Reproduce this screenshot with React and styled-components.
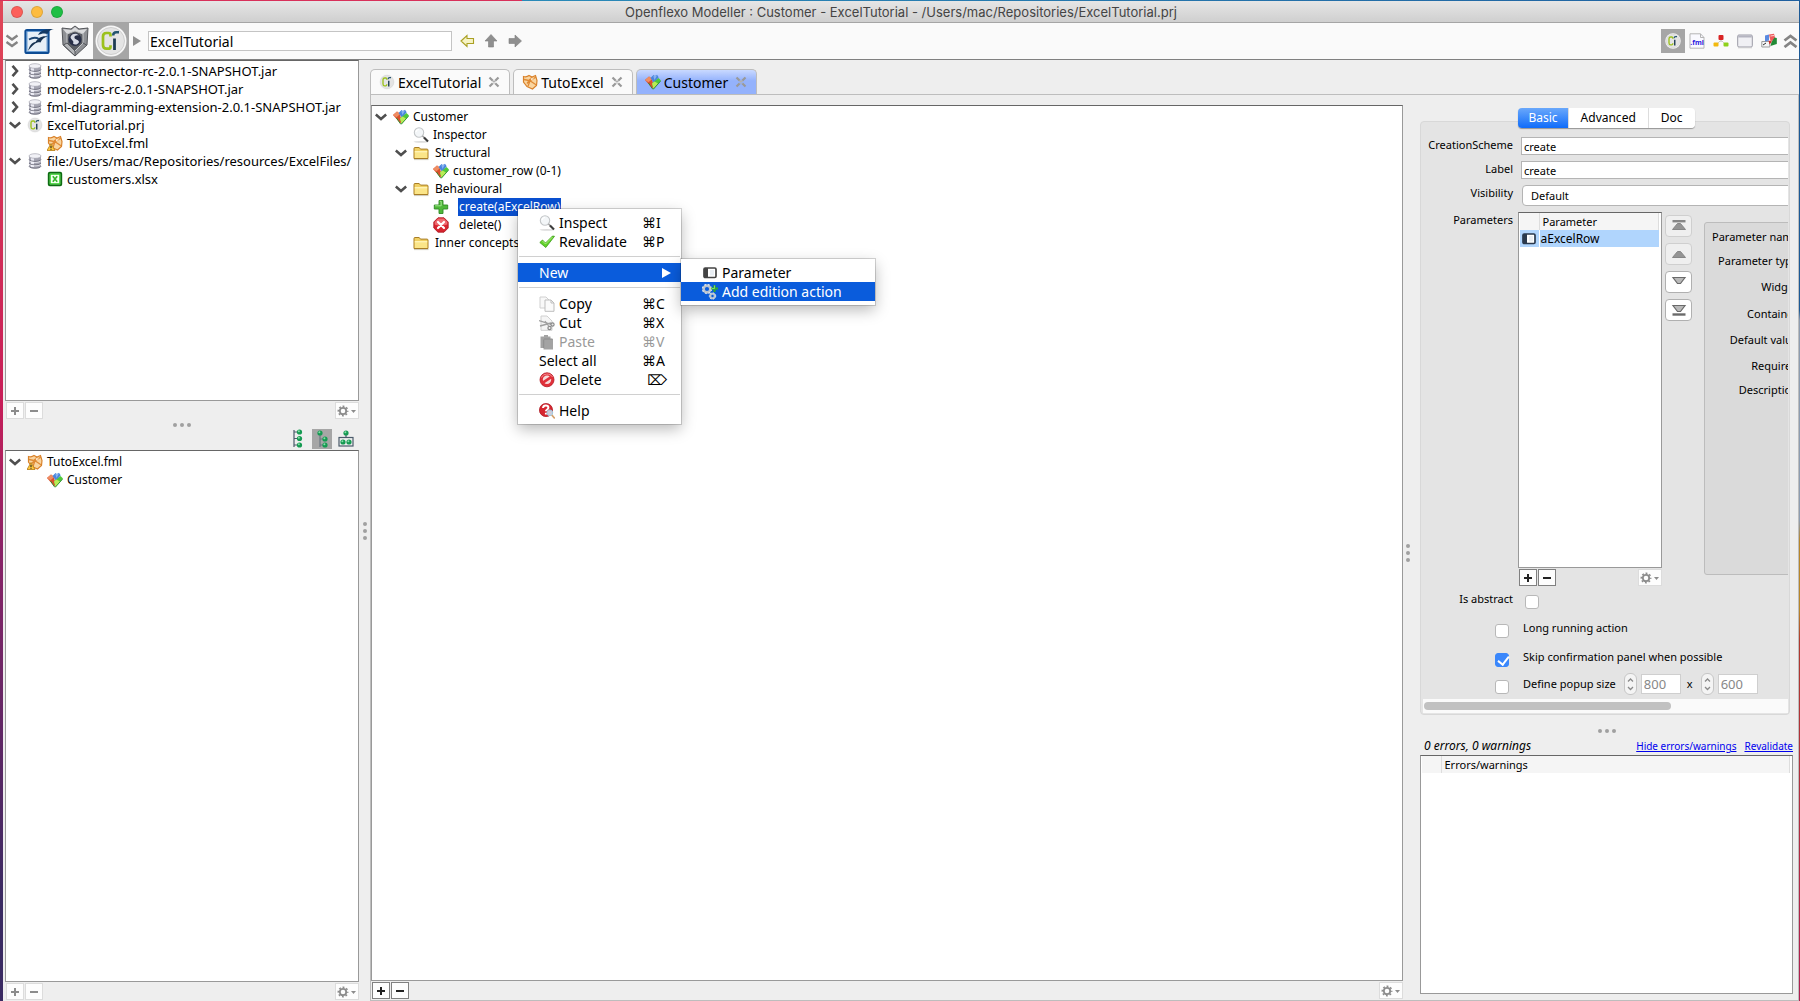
import React from 'react';
import styled, { createGlobalStyle } from 'styled-components';

const GlobalStyle = createGlobalStyle`
  * {
    box-sizing: border-box;
  }
  body {
    margin: 0;
    font-family: 'Noto Sans', 'DejaVu Sans', sans-serif;
    font-size: 12px;
    color: #000;
    background:
      linear-gradient(90deg, #d8305a 0 29%, #2a8ab8 29%, #1f5f9f) top / 100% 1px no-repeat,
      linear-gradient(#e04858, #c81e58 40%, #8a2468 55%, #3a2a62 90%) left / 4px 100% no-repeat,
      linear-gradient(#1d5a96 0 31%, #8d9cb0 32% 52%, #b8862a 54% 61%, #b03a30 64%, #b01e50) right / 2px 100% no-repeat;
  }
  button, input, select {
    font: inherit;
    color: inherit;
    margin: 0;
  }
`;

/* ---------- icons ---------- */

const Svg = styled.svg`
  display: block;
  flex: none;
`;

const Icon = ({ size = 16, w, h, box, children }) => (
  <Svg width={w || size} height={h || size} viewBox={box || '0 0 16 16'} fill="none" aria-hidden="true">
    {children}
  </Svg>
);

const DatabaseIcon = () => (
  <Icon>
    <path d="M2 3v10c0 1.600 2.700 2.500 6 2.500s6-.9 6-2.500V3z" fill="#a5a5b2" />
    <path d="M4 3v11h3V3z" fill="#e9e9f2" />
    <ellipse cx="8" cy="3" rx="6" ry="2.300" fill="#f1f1f6" stroke="#9a9aa6" strokeWidth=".6" />
    <path d="M2 6.500c1 2.500 11 2.500 12 0M2 10c1 2.500 11 2.500 12 0M2 13.300c1 2.500 11 2.500 12 0" stroke="#6f6f7d" strokeWidth=".9" />
    <path d="M2 7.600c1 2.500 11 2.500 12 0M2 11c1 2.500 11 2.500 12 0" stroke="#fafaff" strokeWidth=".7" />
  </Icon>
);

const CiIcon = ({ size = 16 }) => (
  <Icon size={size} box="0 0 32 32">
    <circle cx="16" cy="16" r="15.500" fill="#f6f6f6" />
    <circle cx="16" cy="16" r="13.500" fill="#e4e4e4" stroke="#cfcfcf" />
    <path d="M15.500 11.500V10c0-1.400-.6-2-2-2h-2C9 8 8 9.200 8 11.500v8.500c0 2.500 1 3.700 3.500 3.700h2c1.400 0 2-.6 2-2v-1.400" stroke="#9bc11c" strokeWidth="2.700" />
    <path d="M19.500 13.500V25" stroke="#1d3b52" strokeWidth="2.800" />
    <path d="M18.200 10.500c0-2.300 1-3.300 3-3.300H24" stroke="#24556e" strokeWidth="2.500" />
  </Icon>
);

const FmlIcon = ({ warn }) => (
  <Icon>
    <path d="M1.500 2.500c2 .6 4 .2 5.500-1L10 3l3.500-1.500L15 6.500l-.5 5L10.500 15 5 12.500 1.500 8z" fill="#f9d5a0" stroke="#d9822b" strokeWidth="1.200" />
    <path d="M2 5.500l6 1.200L14 3M8 6.700l-2 5.500M8 6.700l6 4M10 3L5 9.500" stroke="#e08a34" strokeWidth="1.300" />
    <path d="M8.500 4.200l3.500.3-2.500 1.800z" fill="#fff4e0" />
    {warn && (
      <>
        <path d="M4 8.500L8 15.500H0z" fill="#ffc93c" stroke="#b47a12" strokeWidth=".8" />
        <path d="M4 10.800v2.200M4 13.800v1" stroke="#222" strokeWidth="1.100" />
      </>
    )}
  </Icon>
);

const XlsxIcon = () => (
  <Icon>
    <rect x="1.800" y="1.800" width="12.400" height="12.400" rx="1" fill="#fff" stroke="#0d6b12" strokeWidth="2" />
    <rect x="3.200" y="3.200" width="9.600" height="9.600" fill="#f3fff0" stroke="#36d02c" strokeWidth="1.200" />
    <path d="M5.800 5.200l4.400 5.600M10.200 5.200l-4.400 5.600" stroke="#35b52a" strokeWidth="1.600" />
  </Icon>
);

const ConceptIcon = () => (
  <Icon>
    <path d="M0 6l4-3.500 3 2.300L8.500 12 7.500 14.500z" fill="#d9512c" />
    <path d="M0 6l4-3.500 3.300 2.600L3.500 8.200z" fill="#ef8d63" />
    <path d="M5.500 4L8.500 1l1.400 1L12 .8l1.700 2.400L9.200 9z" fill="#4a86dc" />
    <path d="M8.300 2.300L12 1.600 9.500 6z" fill="#86b2f0" />
    <path d="M7 9.500L13.500 4l2.500 2.600L8.500 15z" fill="#4fc93a" />
    <path d="M7 9.500l2.500-2 3.500 2-4.500 5.300z" fill="#b9ec55" />
    <path d="M3.500 9l3.800 5.700L8.500 15l7-7.800" stroke="#2c8a2c" strokeWidth=".9" />
  </Icon>
);

const InspectIcon = () => (
  <Icon>
    <ellipse cx="8" cy="14.800" rx="7.500" ry=".9" fill="#dcdcdc" />
    <circle cx="6" cy="5.500" r="4.700" fill="#f3f6f8" stroke="#c3c6c8" strokeWidth="1.100" />
    <path d="M3 5c.3-1.800 1.500-2.500 3-2.500" stroke="#fff" strokeWidth="1.200" />
    <path d="M9.500 9l1.800 1.700" stroke="#999" strokeWidth="1.500" />
    <path d="M11 10.500l4 4" stroke="#3b3b3b" strokeWidth="2.200" />
  </Icon>
);

const FolderIcon = () => (
  <Icon>
    <path d="M1 13.500V3.500c0-.6.300-1 1-1h4.200l1.300 1.600H14c.6 0 1 .3 1 .9v8.500z" fill="#f0cf62" stroke="#a87d25" />
    <path d="M1.800 6h12.400v7H1.800z" fill="#fbe588" />
    <path d="M1.800 6h12.400v1.400H1.800z" fill="#fff3b4" />
    <path d="M1 14.600h14.500" stroke="#bfb9a6" strokeWidth=".8" />
  </Icon>
);

const PlusIcon = () => (
  <Icon>
    <path d="M6 1.500h4V6h4.700v4H10v4.500H6V10H1.300V6H6z" fill="#4fb83a" stroke="#2f8a24" strokeWidth=".9" />
    <path d="M6.800 2.300h1.400v4.500H2.100" stroke="#a2e58d" />
  </Icon>
);

const StopXIcon = () => (
  <Icon>
    <path d="M5 .8h6L15.200 5v6L11 15.200H5L.8 11V5z" fill="#d8242f" stroke="#a8131d" strokeWidth=".8" />
    <path d="M5.200 1.600h5.600L14.300 5v2.500C10 9 5 9 1.700 7.500V5z" fill="#ee6a70" />
    <path d="M5 5l6 6M11 5l-6 6" stroke="#fff" strokeWidth="2.200" strokeLinecap="round" />
  </Icon>
);

const CheckIcon = () => (
  <Icon>
    <path d="M.8 8.500L3.500 6l3 3L13.500 2l2 .3-8.700 11.200z" fill="#62d22b" stroke="#3d9c1a" strokeWidth=".8" />
    <path d="M3.500 7l3 3L13.500 3" stroke="#b8f28c" strokeWidth=".8" />
  </Icon>
);

const CopyIcon = () => (
  <Icon>
    <path d="M1 1h6l3 3v8H1z" fill="#f8f8f8" stroke="#d0d0d0" />
    <path d="M6 4h6l3 3v8.300H6z" fill="#fafafa" stroke="#bdbdbd" />
    <path d="M12 4v3h3" stroke="#bdbdbd" />
  </Icon>
);

const CutIcon = () => (
  <Icon>
    <path d="M2 1h6l5 5v9.300H2z" fill="#f5f5f5" stroke="#d0d0d0" />
    <path d="M0 5.500l12 3.800M1 11l11-3" stroke="#a0a0a0" strokeWidth="1.300" />
    <circle cx="13.500" cy="9.500" r="1.600" stroke="#888" strokeWidth="1.200" />
    <circle cx="10.500" cy="13" r="1.600" stroke="#888" strokeWidth="1.200" />
    <path d="M6 6l4 5.500" stroke="#a0a0a0" strokeWidth="1.200" />
  </Icon>
);

const PasteIcon = () => (
  <Icon>
    <path d="M1.500 2.500H5V1h4v1.500h2.500V5H14v10.500H4.500V14h-3z" fill="#a3a3a3" />
    <path d="M5 5h8.500M4.700 5.500V14" stroke="#8d8d8d" />
  </Icon>
);

const ForbidIcon = () => (
  <Icon>
    <circle cx="8" cy="7.800" r="7" fill="#e0303a" stroke="#b5151f" strokeWidth=".8" />
    <circle cx="8" cy="7.800" r="4.200" fill="#f6dada" />
    <path d="M3.500 10.800l9-6" stroke="#e0303a" strokeWidth="2.800" />
    <path d="M2.500 5.500c1.500-4 8.500-5 11-.5" stroke="#f58f93" />
  </Icon>
);

const HelpIcon = () => (
  <Icon>
    <circle cx="7" cy="7" r="6.600" fill="#d62630" stroke="#a9121c" strokeWidth=".7" />
    <path d="M4 5c.2-1.900 1.300-2.500 2.700-2.500 1.600 0 2.700.9 2.700 2.200 0 1.800-2.500 1.800-2.500 3.600M6.900 9.800v1.700" stroke="#fff" strokeWidth="2" />
    <circle cx="10.800" cy="9.800" r="2.900" fill="#cfeaf8" fillOpacity=".85" stroke="#9cc8de" />
    <path d="M12.800 12l3 3.500" stroke="#d4a06a" strokeWidth="1.700" />
  </Icon>
);

const ParamIcon = ({ color = '#444' }) => (
  <Icon>
    <rect x="2" y="3" width="12" height="9.500" rx="1.200" fill="#fff" stroke={color} strokeWidth="1.700" />
    <path d="M2 3h4v9.500H2z" fill={color} />
    <path d="M8 5h4v5.500H8z" fill="#e9eef3" />
  </Icon>
);

const ActionIcon = () => (
  <Icon>
    <circle cx="5" cy="5" r="3.400" stroke="#b9c3cf" strokeWidth="2.600" />
    <circle cx="5" cy="5" r="4.500" stroke="#dfe5ec" strokeWidth="1.300" strokeDasharray="1.800 1.800" />
    <circle cx="10.500" cy="12" r="2.200" stroke="#b9c3cf" strokeWidth="2" />
    <circle cx="10.500" cy="12" r="3.200" stroke="#dfe5ec" strokeDasharray="1.500 1.500" />
    <path d="M12.500 1v7M9 4.500h7" stroke="#2fae2a" strokeWidth="2" />
    <path d="M12.500 1.500v3H9.500" stroke="#9be77a" strokeWidth=".8" />
  </Icon>
);

const WriterIcon = () => (
  <Icon w={30} h={28} box="0 0 30 28">
    <rect x="1.500" y="3" width="23" height="23" rx="1.500" fill="#f5f9fc" stroke="#0d4c94" strokeWidth="2.200" />
    <rect x="3" y="4.500" width="20" height="20" fill="#e6eff7" stroke="#4b8acb" strokeWidth=".8" />
    <path d="M14 8c2-4 6-6.500 16-6-4 .8-5 2-6.500 5C21 6 17 6.500 14 8z" fill="#123a66" />
    <path d="M4 24c1.500-5.500 4-9 7.500-9C14 11 17.500 8.500 24 9.500c-4 .5-6 2.500-7.500 6-3.500-.8-7 1.500-12.500 8.500z" fill="#143252" />
    <path d="M5 12.500c3.500-2 7-2.300 10-.5" stroke="#1b4675" strokeWidth="1.800" />
  </Icon>
);

const ShieldIcon = () => (
  <Icon w={30} h={32} box="0 0 30 32">
    <path d="M15 1l4 3 9-1-1 17-12 11L3 20 2 3l9 1z" fill="#8e9094" stroke="#55575b" />
    <path d="M15 2l3.500 3L27 4l-4 5-8-3-8 3-4-5 8.500 1z" fill="#dadbdd" />
    <path d="M7 9l8-3 8 3v9l-8 8-8-8z" fill="#5a5d63" stroke="#c5c7ca" />
    <path d="M15 26v5L3.500 20 7 18zM23 18l3.500 2" stroke="#55575b" fill="#b3b5b8" />
    <circle cx="15" cy="14.500" r="6.500" fill="#282f48" />
    <path d="M10.500 12c1-3.500 6-4.500 8.500-1.500-3-.5-5 .5-4.500 2.500.6 2 4 1 4.500 4-.6 2.500-4.500 3.500-6 1.500 1.500-3-2-3-2.500-6.500z" fill="#d7dbe6" />
  </Icon>
);

const TriRightIcon = () => (
  <Icon w={8} h={10} box="0 0 8 10">
    <path d="M0 0l8 5-8 5z" fill="#8f8f8f" />
  </Icon>
);

const BackIcon = () => (
  <Icon w={15} h={14} box="0 0 15 14">
    <path d="M1 7l6-5.500v3h6.500v5H7v3z" fill="#f6f3c4" stroke="#aaa024" strokeWidth="1.100" />
  </Icon>
);

const ArrowIcon = ({ turn = 0 }) => (
  <Icon w={14} h={14} box="0 0 14 14">
    <path d="M7 .5l6 6.500H9.500v6h-5V7H1z" fill="#8f8f8f" stroke="#7d7d7d" strokeWidth=".6" transform={`rotate(${turn} 7 7)`} />
  </Icon>
);

const ChevronsIcon = ({ up, w = 14 }) => (
  <Icon w={w} h={14} box="0 0 14 14">
    <path
      d={up ? 'M1 6.500l6-4.500 6 4.500M1 13l6-4.500 6 4.500' : 'M1.500 1.500l5.500 4 5.500-4M1.500 8l5.500 4 5.500-4'}
      stroke="#858585"
      strokeWidth={up ? 2.8 : 2.4}
    />
  </Icon>
);

const FmlFileIcon = () => (
  <Icon>
    <path d="M1 .8h10.500L15 4.500v10.700H1z" fill="#fafaff" stroke="#b5b5b5" />
    <path d="M11.500.8v3.700H15" stroke="#b5b5b5" />
    <text x="8" y="12" fontSize="7" fontWeight="700" fontFamily="Noto Sans, sans-serif" fill="#2a20e0" textAnchor="middle">.fml</text>
  </Icon>
);

const OrgIcon = () => (
  <Icon>
    <path d="M8 6v3M3.500 11.500L7 8h2l3.500 3.500" stroke="#c9c9c9" />
    <rect x="5.500" y="2" width="5" height="5" rx="1" fill="#d92424" />
    <rect x=".5" y="9.500" width="5" height="4" rx="1" fill="#f2b90f" />
    <rect x="10.500" y="9.500" width="5" height="4" rx="1" fill="#8fd11c" />
  </Icon>
);

const WindowIcon = () => (
  <Icon>
    <rect x=".7" y="2" width="14.600" height="12" rx="1.200" fill="#f0f0f4" stroke="#9a9aa6" />
    <path d="M1.200 2.500h13.600V4.500H1.200z" fill="#b4b4c0" />
    <path d="M1 14.800h14" stroke="#ccc" strokeWidth=".8" />
  </Icon>
);

const FlagsIcon = () => (
  <Icon>
    <path d="M.8 8.500h8v5.500h-8z" fill="#f6f6f6" stroke="#9c9c9c" />
    <path d="M2 12l3-2" stroke="#333" />
    <path d="M4 2.500l4-1v6L4 8.500z" fill="#5a8ae0" />
    <path d="M8 1.500l5-.8 1.500 6-5 1.500z" fill="#ef5b5b" />
    <path d="M9.500 3l3.500-.5" stroke="#fbd0d0" />
    <path d="M13.500 4.500l2.300.6v6L9.500 13l1-4z" fill="#218a36" />
    <path d="M7.500 7.500l3.500 1-2.500 3z" fill="#d42929" />
  </Icon>
);

const GreenNode = ({ x, y }) => (
  <>
    <circle cx={x} cy={y} r="2.600" fill="#159a52" />
    <circle cx={x - 0.6} cy={y - 0.8} r="1" fill="#85e0a8" />
  </>
);

const ListLayoutIcon = () => (
  <Icon w={16} h={20} box="0 0 16 20">
    <path d="M4 1v17M4 3h5M4 9.500h5M4 16h5" stroke="#4b5b6b" strokeWidth="1.200" />
    <GreenNode x={9.500} y={3} /><GreenNode x={9.500} y={9.500} /><GreenNode x={9.500} y={16} />
  </Icon>
);

const NestedLayoutIcon = () => (
  <Icon w={16} h={20} box="0 0 16 20">
    <path d="M6 4v14M6 10h5M6 16h5" stroke="#6b7680" strokeWidth="1.200" />
    <GreenNode x={6} y={4} /><GreenNode x={11} y={10} /><GreenNode x={11} y={16} />
  </Icon>
);

const GroupLayoutIcon = () => (
  <Icon w={16} h={20} box="0 0 16 20">
    <rect x="1" y="8.500" width="14" height="8.500" stroke="#4b5b6b" strokeWidth="1.200" />
    <path d="M8 5v4" stroke="#4b5b6b" strokeWidth="1.200" />
    <GreenNode x={8} y={4} /><GreenNode x={5} y={13} /><GreenNode x={11} y={13} />
  </Icon>
);

const Chevron = ({ open }) => (
  <Icon w={12} h={12} box="0 0 12 12">
    <path d={open ? 'M.8 3.500l5.200 4.500 5.200-4.500' : 'M3.500.8l4.500 5.200-4.500 5.200'} stroke="#4f4f4f" strokeWidth="2.600" />
  </Icon>
);

const CloseIcon = () => (
  <Icon w={12} h={12} box="0 0 12 12">
    <path d="M1.500 1.500l3.300 3.300M7.200 7.200l3.300 3.300M10.500 1.500L7.200 4.800M4.800 7.200l-3.300 3.300" stroke="#999" strokeWidth="2.200" />
    <path d="M4.500 4.500l3 3M7.500 4.500l-3 3" stroke="#b0b0b0" strokeWidth="1.300" />
  </Icon>
);

const GearIcon = () => (
  <Icon w={20} h={12} box="0 0 20 12">
    <circle cx="6" cy="6" r="3.200" stroke="#8c8c8c" strokeWidth="1.800" />
    <circle cx="6" cy="6" r="4.700" stroke="#8c8c8c" strokeWidth="1.500" strokeDasharray="1.900 1.790" strokeDashoffset="1" />
    <path d="M14 5h5l-2.500 3z" fill="#8c8c8c" />
  </Icon>
);

const SignIcon = ({ minus }) => (
  <Icon w={10} h={10} box="0 0 10 10">
    <path d={minus ? 'M1 5h8' : 'M1 5h8M5 1v8'} stroke="currentColor" strokeWidth="2" />
  </Icon>
);

const MoveIcon = ({ down, bar }) => (
  <Icon w={16} h={14} box="0 0 16 14">
    {down ? (
      <>
        <path d="M2 2.500h12l-4.500 6h-3z" fill="#b9b9b9" stroke="#6a6a6a" strokeWidth="1.200" />
        {bar && <path d="M1.500 11.500h13" stroke="#6a6a6a" strokeWidth="2.400" />}
      </>
    ) : (
      <>
        <path d="M6.500 4.500h3l5 6h-13z" fill="#949494" stroke="#868686" />
        {bar && <path d="M1.500 2.200h13" stroke="#868686" strokeWidth="2.400" />}
      </>
    )}
  </Icon>
);

const SubmenuArrow = () => (
  <Icon w={9} h={10} box="0 0 9 10">
    <path d="M0 0l9 5-9 5z" fill="#fff" />
  </Icon>
);

/* ---------- window ---------- */

const Window = styled.div`
  height: 100vh;
  border: 1px solid transparent;
  border-width: 1px 1px 0 3px;
  display: flex;
  flex-direction: column;
  overflow: hidden;
  background: #eee padding-box;
`;

const TitleBar = styled.header`
  height: 22px;
  flex: none;
  display: grid;
  grid-template-columns: 1fr auto 1fr;
  align-items: center;
  background: linear-gradient(#e6e6e6, #cfcfcf);
  border-bottom: 1px solid #a5a5a5;
  border-radius: 5px 5px 0 0;
`;

const Lights = styled.div`
  display: flex;
  gap: 8px;
  padding-left: 8px;
`;

const Light = styled.button`
  width: 12px;
  height: 12px;
  padding: 0;
  border: 1px solid rgba(0, 0, 0, 0.12);
  border-radius: 50%;
  background: ${(p) => p.$color};
`;

const Title = styled.h1`
  margin: 0;
  font-family: Inter, Roboto, sans-serif;
  font-size: 13px;
  font-weight: 400;
  line-height: 20px;
  color: #444;
`;

const Toolbar = styled.div`
  height: 37px;
  flex: none;
  display: flex;
  align-items: center;
  background: #fafafa;
  border-bottom: 1px solid #808080;
`;

const Tool = styled.button`
  width: ${(p) => p.$w || 36}px;
  height: ${(p) => p.$h || 36}px;
  flex: none;
  padding: 0;
  border: 0;
  display: flex;
  align-items: center;
  justify-content: center;
  background: ${(p) => (p.$active ? '#a6a6a6' : 'transparent')};
`;

const Location = styled.input`
  width: 304px;
  height: 20px;
  margin: 0 3px;
  padding: 0 1px;
  border: 1px solid #c4c4c4;
  background: #fff;
  font-size: 14px;
`;

const ToolbarEnd = styled.div`
  margin-left: auto;
  display: flex;
`;

const Body = styled.main`
  flex: 1;
  min-height: 0;
  display: flex;
`;

const Sidebar = styled.aside`
  width: 356px;
  flex: none;
  padding-left: 2px;
  display: flex;
  flex-direction: column;
`;

const TreeBox = styled.div`
  flex: ${(p) => p.$grow || 1} 1 0;
  min-height: 0;
  padding: ${(p) => (p.$size ? 1 : 2)}px 0 0 2px;
  background: #fff;
  border: 1px solid #999;
  border-top-color: #666;
  font-size: ${(p) => p.$size || 12}px;
`;

const Tree = styled.ul`
  margin: 0;
  padding: 0 0 0 ${(p) => (p.$nested ? 20 : 0)}px;
  list-style: none;
`;

const TreeRow = styled.div`
  height: 18px;
  display: flex;
  align-items: center;
`;

const Toggle = styled.button`
  width: 19px;
  height: 18px;
  flex: none;
  padding: 0 0 0 1px;
  border: 0;
  background: none;
`;

const TreeLabel = styled.span`
  position: relative;
  margin-left: ${(p) => p.$gap || 3}px;
  padding: 0 1px;
  line-height: 18px;
  white-space: nowrap;
  color: ${(p) => (p.$selected ? '#fff' : '#000')};
  background: ${(p) => (p.$selected ? '#0a50d0' : 'none')};
`;

const ListFooter = styled.div`
  height: 19px;
  flex: none;
  padding: 1px 0 0 1px;
  display: flex;
  gap: 1px;
`;

const SmallButton = styled.button`
  width: ${(p) => (p.$wide ? 24 : 18)}px;
  height: 17px;
  flex: none;
  padding: 0;
  display: flex;
  align-items: center;
  justify-content: center;
  background: #fdfdfd;
  color: ${(p) => (p.$on ? '#222' : '#8c8c8c')};
  border: 1px solid ${(p) => (p.$on ? '#808080' : '#dcdcdc')};
  &:last-child {
    margin-left: auto;
  }
`;

const Dots = styled.div`
  flex: none;
  display: flex;
  flex-direction: ${(p) => (p.$vertical ? 'column' : 'row')};
  align-items: center;
  justify-content: center;
  gap: 3px;
  padding-top: ${(p) => p.$drop || 0}px;
  width: ${(p) => (p.$vertical ? `${p.$size}px` : 'auto')};
  height: ${(p) => (p.$vertical ? 'auto' : `${p.$size}px`)};
  > i {
    width: 4px;
    height: 4px;
    border-radius: 50%;
    background: #a0a0a0;
  }
`;

const LayoutBar = styled.div`
  height: 21px;
  flex: none;
  padding: 0 3px 1px 0;
  display: flex;
  justify-content: flex-end;
  gap: 4px;
`;

const Workspace = styled.section`
  flex: 1;
  min-width: 0;
  padding-top: 9px;
  display: flex;
  flex-direction: column;
`;

const Tabs = styled.div`
  display: flex;
  gap: 3px;
`;

const Tab = styled.div`
  height: 25px;
  padding: 0 9px 0 8px;
  display: flex;
  align-items: center;
  font-size: 14px;
  border: 1px solid #bdbdbd;
  border-bottom: 0;
  border-radius: 5px 5px 0 0;
  background: ${(p) => (p.$active ? 'linear-gradient(#c9d9ff, #94b2fc 45%)' : '#fafafa')};
`;

const TabName = styled.button`
  padding: 0;
  border: 0;
  background: none;
  display: flex;
  align-items: center;
  gap: 3px;
`;

const TabClose = styled.button`
  margin-left: 7px;
  padding: 0;
  border: 0;
  background: none;
`;

const Panel = styled.div`
  flex: 1;
  min-height: 0;
  padding-top: 10px;
  display: flex;
  border: 1px solid #bdbdbd;
`;

const Editor = styled.div`
  flex: 1;
  min-width: 0;
  display: flex;
  flex-direction: column;
`;

const Inspector = styled.aside`
  width: 386px;
  flex: none;
  padding: 3px 5px 6px 8px;
  display: flex;
  flex-direction: column;
`;

/* ---------- context menu ---------- */

const Menu = styled.div`
  position: absolute;
  z-index: 2;
  top: ${(p) => p.$top}px;
  left: ${(p) => p.$left}px;
  width: ${(p) => p.$width}px;
  padding: 4px 0;
  background: #fff;
  box-shadow: 0 0 0 1px rgba(0, 0, 0, 0.16), 0 5px 14px rgba(0, 0, 0, 0.28);
  color: #000;
`;

const MenuItem = styled.button`
  width: 100%;
  height: 19px;
  padding: 0 10px 0 21px;
  border: 0;
  display: flex;
  align-items: center;
  gap: 4px;
  text-align: left;
  font-size: 14px;
  line-height: 19px;
  background: ${(p) => (p.$active ? '#0a5cdc' : 'none')};
  color: ${(p) => (p.$active ? '#fff' : '#000')};
  &:disabled {
    color: #999;
  }
`;

const MenuText = styled.span`
  flex: 1;
`;

const Shortcut = styled.kbd`
  width: 29px;
  padding-right: ${(p) => (p.$end ? 4 : 0)}px;
  font: inherit;
  text-align: ${(p) => (p.$end ? 'right' : 'left')};
  white-space: nowrap;
`;

const Separator = styled.hr`
  height: 1px;
  margin: 5px 1px 6px;
  border: 0;
  background: #d0d0d0;
`;

/* ---------- inspector form ---------- */

const Segments = styled.div`
  align-self: center;
  position: relative;
  margin-bottom: -7px;
  display: flex;
  border-radius: 4px;
  box-shadow: 0 1px 1px rgba(0, 0, 0, 0.35);
`;

const Segment = styled.button`
  height: 20px;
  padding: 0 ${(p) => p.$pad}px;
  border: 0;
  border-left: 1px solid #ddd;
  font-size: 12px;
  line-height: 20px;
  background: ${(p) => (p.$active ? 'linear-gradient(#6aa8fb, #0f6cfa)' : '#fff')};
  color: ${(p) => (p.$active ? '#fff' : '#000')};
  &:first-child {
    border-left: 0;
    border-radius: 4px 0 0 4px;
  }
  &:last-child {
    border-radius: 0 4px 4px 0;
  }
`;

const GroupBox = styled.div`
  flex: 576 1 0;
  min-height: 0;
  margin-right: 3px;
  padding: 15px 1px 1px 2px;
  display: flex;
  flex-direction: column;
  background: #e4e4e4;
  border: 1px solid #d8d8d8;
  border-radius: 4px;
`;

const Viewport = styled.div`
  flex: 1;
  min-height: 0;
  overflow: hidden;
  font-size: 11px;
`;

const Form = styled.form`
  width: 560px;
  height: 100%;
  display: flex;
  flex-direction: column;
`;

const Field = styled.div`
  height: 24px;
  flex: none;
  display: flex;
  > label {
    width: 90px;
    line-height: 15px;
    text-align: right;
  }
`;

const TextBox = styled.input`
  width: 420px;
  height: 18px;
  margin-left: 8px;
  padding: 0 2px;
  border: 1px solid #b4b4b4;
  background: #fff;
`;

const Select = styled.select`
  appearance: none;
  width: 420px;
  height: 21px;
  margin: 0 0 0 9px;
  padding: 0 8px;
  border: 1px solid #b4b4b4;
  border-radius: 4px;
  background: #fff;
`;

const ParamSection = styled.div`
  flex: 1;
  min-height: 0;
  padding-top: 3px;
  display: flex;
`;

const ParamLabel = styled.span`
  width: 90px;
  line-height: 16px;
  text-align: right;
`;

const ParamColumn = styled.div`
  width: 144px;
  margin-left: 5px;
  display: flex;
  flex-direction: column;
`;

const TableBox = styled.div`
  flex: ${(p) => p.$grow || 1} 1 0;
  min-height: 0;
  padding: 0 2px 0 1px;
  background: #fff;
  border: 1px solid #999;
  border-top-color: #666;
`;

const Table = styled.table`
  width: 100%;
  border-collapse: collapse;
  font-size: 12px;
  th {
    height: 17px;
    padding: 0 3px;
    background: #f5f5f5;
    border-right: 1px solid #ddd;
    font-size: 11px;
    font-weight: 400;
    line-height: 17px;
    text-align: left;
  }
  td {
    height: 17px;
    padding: 0 1px;
    background: #b0d5fd;
    line-height: 17px;
  }
  td:first-child {
    border-right: 1px solid #fff;
  }
`;

const MoveColumn = styled.div`
  margin: 3px 12px 0 3px;
  display: flex;
  flex-direction: column;
  gap: 6px;
`;

const MoveButton = styled.button`
  width: 27px;
  height: 22px;
  padding: 0;
  display: flex;
  align-items: center;
  justify-content: center;
  border: 1px solid ${(p) => (p.disabled ? '#cfcfcf' : '#b0b0b0')};
  border-radius: 4px;
  background: ${(p) => (p.disabled ? '#efefef' : '#fff')};
`;

const Details = styled.div`
  width: 240px;
  margin: 10px 0 12px;
  padding: 1px 0 0 7px;
  background: #dadada;
  border: 1px solid #bcbcbc;
  border-radius: 3px;
`;

const DetailRow = styled.div`
  height: ${(p) => p.$h}px;
  display: flex;
  align-items: center;
  > label {
    flex: none;
    width: 86px;
    text-align: right;
    white-space: nowrap;
  }
`;

const DetailInput = styled.input`
  width: 120px;
  height: 18px;
  margin-left: 8px;
  border: 1px solid #b4b4b4;
`;

const CheckRow = styled.div`
  height: 29px;
  flex: none;
  padding-left: ${(p) => p.$indent || 0}px;
  display: flex;
  align-items: center;
  > label {
    line-height: 16px;
    padding-bottom: 5px;
  }
  &:last-child {
    height: 25px;
  }
`;

const LeadLabel = styled.label`
  width: 90px;
  text-align: right;
`;

const Check = styled.input.attrs({ type: 'checkbox' })`
  appearance: none;
  width: 14px;
  height: 14px;
  flex: none;
  margin: 0 ${(p) => (p.$lead ? 0 : 14)}px 0 ${(p) => (p.$lead ? 12 : 0)}px;
  border: 1px solid #b8b8b8;
  border-radius: 3px;
  background: #fff;
  &:checked {
    border-color: #3a87fb;
    background: #3a87fb;
  }
  &:checked::after {
    content: '';
    display: block;
    width: 5px;
    height: 9px;
    margin: 0 0 0 4px;
    border: solid #fff;
    border-width: 0 2px 2px 0;
    transform: rotate(38deg);
  }
`;

const Stepper = styled.button`
  width: 13px;
  height: 22px;
  margin: 0 4px 6px 8px;
  padding: 0;
  border: 1px solid #c6c6c6;
  border-radius: 6px;
  background: #f4f4f4;
`;

const NumberBox = styled.input`
  width: 40px;
  height: 20px;
  margin: 0 6px 6px 0;
  padding: 0 2px;
  border: 1px solid #cfcfcf;
  background: #fff;
  color: #888;
  font-size: 13px;
`;

const ScrollTrack = styled.div`
  height: 14px;
  flex: none;
  padding: 3px 1px;
  background: #fafafa;
`;

const ScrollThumb = styled.div`
  width: 68%;
  height: 8px;
  border-radius: 4px;
  background: #c1c1c1;
`;

const Status = styled.div`
  height: 16px;
  flex: none;
  padding-left: 4px;
  display: flex;
  align-items: flex-start;
  gap: 8px;
  font-size: 10px;
  line-height: 14px;
  white-space: nowrap;
  > em {
    margin-right: auto;
    font-size: 12px;
    line-height: 14px;
  }
  > a {
    color: #0000ee;
  }
`;

/* ---------- pieces ---------- */

const Splitter = ({ vertical, size, drop }) => (
  <Dots $vertical={vertical} $size={size} $drop={drop}>
    <i /><i /><i />
  </Dots>
);

const Footer = ({ on }) => (
  <ListFooter>
    <SmallButton type="button" $on={on} aria-label="Add"><SignIcon /></SmallButton>
    <SmallButton type="button" $on={on} aria-label="Remove"><SignIcon minus /></SmallButton>
    <SmallButton type="button" $wide aria-label="Options"><GearIcon /></SmallButton>
  </ListFooter>
);

const Item = ({ icon, text, keys, active, disabled, submenu, end }) => (
  <MenuItem type="button" role="menuitem" $active={active} disabled={disabled}>
    {icon}
    <MenuText>{text}</MenuText>
    {keys && <Shortcut $end={end}>{keys}</Shortcut>}
    {submenu && <SubmenuArrow />}
  </MenuItem>
);

const ContextMenu = () => (
  <Menu role="menu" $top={11} $left={60} $width={163}>
    <Item icon={<InspectIcon />} text="Inspect" keys="⌘I" />
    <Item icon={<CheckIcon />} text="Revalidate" keys="⌘P" />
    <Separator />
    <Item text="New" active submenu />
    <Separator />
    <Item icon={<CopyIcon />} text="Copy" keys="⌘C" />
    <Item icon={<CutIcon />} text="Cut" keys="⌘X" />
    <Item icon={<PasteIcon />} text="Paste" keys="⌘V" disabled />
    <Item text="Select all" keys="⌘A" />
    <Item icon={<ForbidIcon />} text="Delete" keys="⌦" end />
    <Separator />
    <Item icon={<HelpIcon />} text="Help" />
    <Menu role="menu" $top={50} $left={163} $width={194}>
      <Item icon={<ParamIcon />} text="Parameter" />
      <Item icon={<ActionIcon />} text="Add edition action" active />
    </Menu>
  </Menu>
);

const renderNodes = (nodes, nested) => (
  <Tree $nested={nested}>
    {nodes.map((node) => (
      <li key={node.name}>
        <TreeRow>
          <Toggle type="button" aria-label={`Toggle ${node.name}`} disabled={node.open === undefined}>
            {node.open !== undefined && <Chevron open={node.open} />}
          </Toggle>
          {node.icon}
          <TreeLabel $gap={node.gap} $selected={node.selected}>
            {node.name}
            {node.menu}
          </TreeLabel>
        </TreeRow>
        {node.children && renderNodes(node.children, true)}
      </li>
    ))}
  </Tree>
);

const resources = [
  { name: 'http-connector-rc-2.0.1-SNAPSHOT.jar', icon: <DatabaseIcon />, open: false },
  { name: 'modelers-rc-2.0.1-SNAPSHOT.jar', icon: <DatabaseIcon />, open: false },
  { name: 'fml-diagramming-extension-2.0.1-SNAPSHOT.jar', icon: <DatabaseIcon />, open: false },
  {
    name: 'ExcelTutorial.prj',
    icon: <CiIcon />,
    open: true,
    children: [{ name: 'TutoExcel.fml', icon: <FmlIcon warn /> }],
  },
  {
    name: 'file:/Users/mac/Repositories/resources/ExcelFiles/',
    icon: <DatabaseIcon />,
    open: true,
    children: [{ name: 'customers.xlsx', icon: <XlsxIcon /> }],
  },
];

const outline = [
  {
    name: 'TutoExcel.fml',
    icon: <FmlIcon warn />,
    open: true,
    children: [{ name: 'Customer', icon: <ConceptIcon /> }],
  },
];

const concept = [
  {
    name: 'Customer',
    icon: <ConceptIcon />,
    open: true,
    children: [
      { name: 'Inspector', icon: <InspectIcon /> },
      {
        name: 'Structural',
        icon: <FolderIcon />,
        gap: 5,
        open: true,
        children: [{ name: 'customer_row (0-1)', icon: <ConceptIcon /> }],
      },
      {
        name: 'Behavioural',
        icon: <FolderIcon />,
        gap: 5,
        open: true,
        children: [
          { name: 'create(aExcelRow)', icon: <PlusIcon />, gap: 9, selected: true, menu: <ContextMenu /> },
          { name: 'delete()', icon: <StopXIcon />, gap: 9 },
        ],
      },
      { name: 'Inner concepts', icon: <FolderIcon />, gap: 5 },
    ],
  },
];

const tabs = [
  { name: 'ExcelTutorial', icon: <CiIcon /> },
  { name: 'TutoExcel', icon: <FmlIcon /> },
  { name: 'Customer', icon: <ConceptIcon />, active: true },
];

const details = [
  ['Parameter name', 24],
  ['Parameter type', 24],
  ['Widget', 28],
  ['Container', 26],
  ['Default value', 26],
  ['Required', 26],
  ['Description', 22],
];

const StepArrows = () => (
  <Icon w={11} h={20} box="0 0 11 20">
    <path d="M3 7.500L5.500 5 8 7.500M3 13l2.500 2.500L8 13" stroke="#8a8a8a" strokeWidth="1.300" />
  </Icon>
);

function InspectorForm() {
  return (
    <Form>
      <Field>
        <label htmlFor="scheme">CreationScheme</label>
        <TextBox id="scheme" defaultValue="create" />
      </Field>
      <Field>
        <label htmlFor="label">Label</label>
        <TextBox id="label" defaultValue="create" />
      </Field>
      <Field>
        <label htmlFor="visibility">Visibility</label>
        <Select id="visibility">
          <option>Default</option>
        </Select>
      </Field>
      <ParamSection>
        <ParamLabel>Parameters</ParamLabel>
        <ParamColumn>
          <TableBox>
            <Table>
              <thead>
                <tr>
                  <th width="19" aria-label="Kind" />
                  <th>Parameter</th>
                </tr>
              </thead>
              <tbody>
                <tr>
                  <td><ParamIcon color="#2b3a4e" /></td>
                  <td>aExcelRow</td>
                </tr>
              </tbody>
            </Table>
          </TableBox>
          <Footer on />
        </ParamColumn>
        <MoveColumn>
          <MoveButton type="button" aria-label="Move to top" disabled><MoveIcon bar /></MoveButton>
          <MoveButton type="button" aria-label="Move up" disabled><MoveIcon /></MoveButton>
          <MoveButton type="button" aria-label="Move down"><MoveIcon down /></MoveButton>
          <MoveButton type="button" aria-label="Move to bottom"><MoveIcon down bar /></MoveButton>
        </MoveColumn>
        <Details>
          {details.map(([name, height]) => (
            <DetailRow key={name} $h={height}>
              <label htmlFor={name}>{name}</label>
              <DetailInput id={name} />
            </DetailRow>
          ))}
        </Details>
      </ParamSection>
      <CheckRow>
        <LeadLabel htmlFor="abstract">Is abstract</LeadLabel>
        <Check id="abstract" $lead />
      </CheckRow>
      <CheckRow $indent={72}>
        <Check id="long" />
        <label htmlFor="long">Long running action</label>
      </CheckRow>
      <CheckRow $indent={72}>
        <Check id="skip" defaultChecked />
        <label htmlFor="skip">Skip confirmation panel when possible</label>
      </CheckRow>
      <CheckRow $indent={72}>
        <Check id="popup" />
        <label htmlFor="popup">Define popup size</label>
        <Stepper type="button" aria-label="Change width"><StepArrows /></Stepper>
        <NumberBox aria-label="Width" defaultValue="800" disabled />
        <label htmlFor="height">x</label>
        <Stepper type="button" aria-label="Change height"><StepArrows /></Stepper>
        <NumberBox id="height" defaultValue="600" disabled />
      </CheckRow>
    </Form>
  );
}

function App() {
  return (
    <>
      <GlobalStyle />
      <Window>
        <TitleBar>
          <Lights>
            <Light type="button" $color="#fc605b" aria-label="Close" />
            <Light type="button" $color="#fdbc40" aria-label="Minimise" />
            <Light type="button" $color="#1fbf45" aria-label="Zoom" />
          </Lights>
          <Title>Openflexo Modeller : Customer - ExcelTutorial - /Users/mac/Repositories/ExcelTutorial.prj</Title>
        </TitleBar>
        <Toolbar>
          <Tool type="button" $w={18} aria-label="Hide left panel"><ChevronsIcon /></Tool>
          <Tool type="button" aria-label="Writer"><WriterIcon /></Tool>
          <Tool type="button" aria-label="Shield"><ShieldIcon /></Tool>
          <Tool type="button" $active aria-label="Connect"><CiIcon size={32} /></Tool>
          <Tool type="button" $w={16} aria-label="Expand"><TriRightIcon /></Tool>
          <Location aria-label="Location" defaultValue="ExcelTutorial" />
          <Tool type="button" $w={24} aria-label="Back"><BackIcon /></Tool>
          <Tool type="button" $w={24} aria-label="Up"><ArrowIcon /></Tool>
          <Tool type="button" $w={24} aria-label="Forward"><ArrowIcon turn={90} /></Tool>
          <ToolbarEnd>
            <Tool type="button" $w={24} $h={24} $active aria-label="Model view"><CiIcon /></Tool>
            <Tool type="button" $w={24} $h={24} aria-label="FML view"><FmlFileIcon /></Tool>
            <Tool type="button" $w={24} $h={24} aria-label="Diagram view"><OrgIcon /></Tool>
            <Tool type="button" $w={24} $h={24} aria-label="Window view"><WindowIcon /></Tool>
            <Tool type="button" $w={24} $h={24} aria-label="Languages"><FlagsIcon /></Tool>
            <Tool type="button" $w={18} $h={24} aria-label="Collapse"><ChevronsIcon up w={15} /></Tool>
          </ToolbarEnd>
        </Toolbar>
        <Body>
          <Sidebar>
            <TreeBox $grow={341} $size={13}>{renderNodes(resources)}</TreeBox>
            <Footer />
            <Splitter size={9} />
            <LayoutBar>
              <Tool type="button" $w={20} $h={20} aria-label="List layout"><ListLayoutIcon /></Tool>
              <Tool type="button" $w={20} $h={20} $active aria-label="Nested layout"><NestedLayoutIcon /></Tool>
              <Tool type="button" $w={20} $h={20} aria-label="Group layout"><GroupLayoutIcon /></Tool>
            </LayoutBar>
            <TreeBox $grow={532}>{renderNodes(outline)}</TreeBox>
            <Footer />
          </Sidebar>
          <Splitter vertical size={11} />
          <Workspace>
            <Tabs>
              {tabs.map((tab) => (
                <Tab key={tab.name} $active={tab.active}>
                  <TabName type="button">
                    {tab.icon}
                    {tab.name}
                  </TabName>
                  <TabClose type="button" aria-label={`Close ${tab.name}`}><CloseIcon /></TabClose>
                </Tab>
              ))}
            </Tabs>
            <Panel>
              <Editor>
                <TreeBox>{renderNodes(concept)}</TreeBox>
                <Footer on />
              </Editor>
              <Splitter vertical size={9} />
              <Inspector>
                <Segments>
                  <Segment type="button" $pad={10} $active>Basic</Segment>
                  <Segment type="button" $pad={12}>Advanced</Segment>
                  <Segment type="button" $pad={12}>Doc</Segment>
                </Segments>
                <GroupBox>
                  <Viewport>
                    <InspectorForm />
                  </Viewport>
                  <ScrollTrack><ScrollThumb /></ScrollTrack>
                </GroupBox>
                <Splitter size={24} drop={7} />
                <Status>
                  <em>0 errors, 0 warnings</em>
                  <a href="#errors">Hide errors/warnings</a>
                  <a href="#revalidate">Revalidate</a>
                </Status>
                <TableBox $grow={237}>
                  <Table>
                    <thead>
                      <tr>
                        <th width="19" aria-label="Severity" />
                        <th>Errors/warnings</th>
                      </tr>
                    </thead>
                  </Table>
                </TableBox>
              </Inspector>
            </Panel>
          </Workspace>
        </Body>
      </Window>
    </>
  );
}

export default App;
